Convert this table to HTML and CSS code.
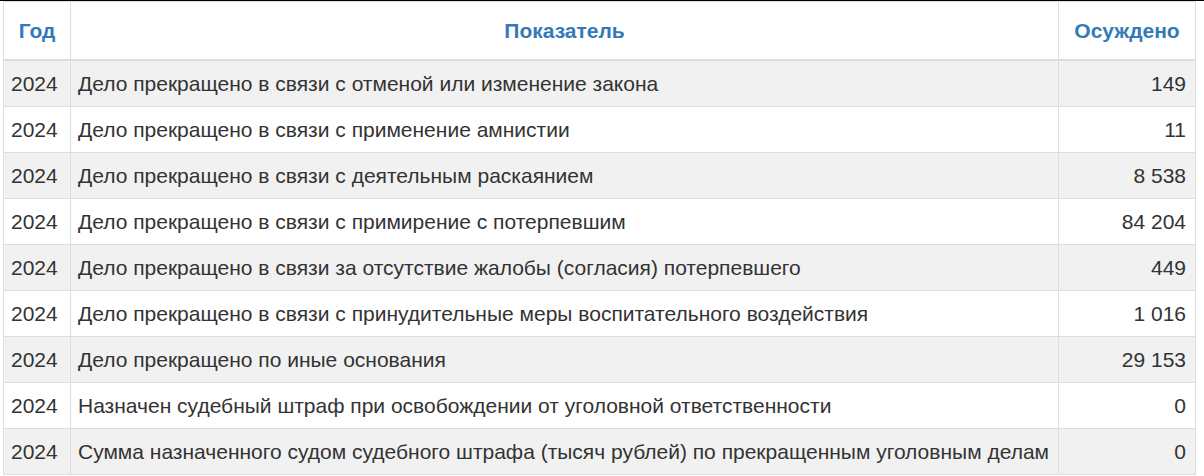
FILE: index.html
```html
<!DOCTYPE html>
<html lang="ru">
<head>
<meta charset="utf-8">
<title>Таблица</title>
<link rel="stylesheet" href="styles.css">
</head>
<body>
<div class="wrap">
<table class="stats">
<colgroup><col class="c-year"><col class="c-name"><col class="c-num"></colgroup>
<thead>
<tr><th>Год</th><th>Показатель</th><th>Осуждено</th></tr>
</thead>
<tbody>
<tr><td>2024</td><td>Дело прекращено в связи с отменой или изменение закона</td><td class="num">149</td></tr>
<tr><td>2024</td><td>Дело прекращено в связи с применение амнистии</td><td class="num">11</td></tr>
<tr><td>2024</td><td>Дело прекращено в связи с деятельным раскаянием</td><td class="num">8 538</td></tr>
<tr><td>2024</td><td>Дело прекращено в связи с примирение с потерпевшим</td><td class="num">84 204</td></tr>
<tr><td>2024</td><td>Дело прекращено в связи за отсутствие жалобы (согласия) потерпевшего</td><td class="num">449</td></tr>
<tr><td>2024</td><td>Дело прекращено в связи с принудительные меры воспитательного воздействия</td><td class="num">1 016</td></tr>
<tr><td>2024</td><td>Дело прекращено по иные основания</td><td class="num">29 153</td></tr>
<tr><td>2024</td><td>Назначен судебный штраф при освобождении от уголовной ответственности</td><td class="num">0</td></tr>
<tr><td>2024</td><td>Сумма назначенного судом судебного штрафа (тысяч рублей) по прекращенным уголовным делам</td><td class="num">0</td></tr>
</tbody>
</table>
</div>
</body>
</html>
```
FILE: styles.css
```css
html, body {
  margin: 0;
  padding: 0;
  background: #fff;
}
body {
  font-family: "Liberation Sans", Arial, sans-serif;
  font-size: 21px;
  color: #333;
}
.wrap {
  border-top: 1px solid #000;
  padding-left: 3px;
}
.stats {
  border-collapse: collapse;
  table-layout: fixed;
  width: 1192px;
  border: 1px solid #ddd;
}
.c-year { width: 67px; }
.c-name { width: 988px; }
.c-num { width: 137px; }
.stats th,
.stats td {
  border: 1px solid #ddd;
  line-height: 25px;
  white-space: nowrap;
}
.stats th {
  padding: 16px 7px;
  border-bottom: 2px solid #ddd;
  color: #337ab7;
  font-weight: bold;
  text-align: center;
}
.stats td {
  padding: 10px 7px;
  text-align: left;
}
.stats td.num {
  text-align: right;
  padding-right: 9px;
}
.stats tbody tr:nth-child(odd) td {
  background: #f1f1f1;
}
```
